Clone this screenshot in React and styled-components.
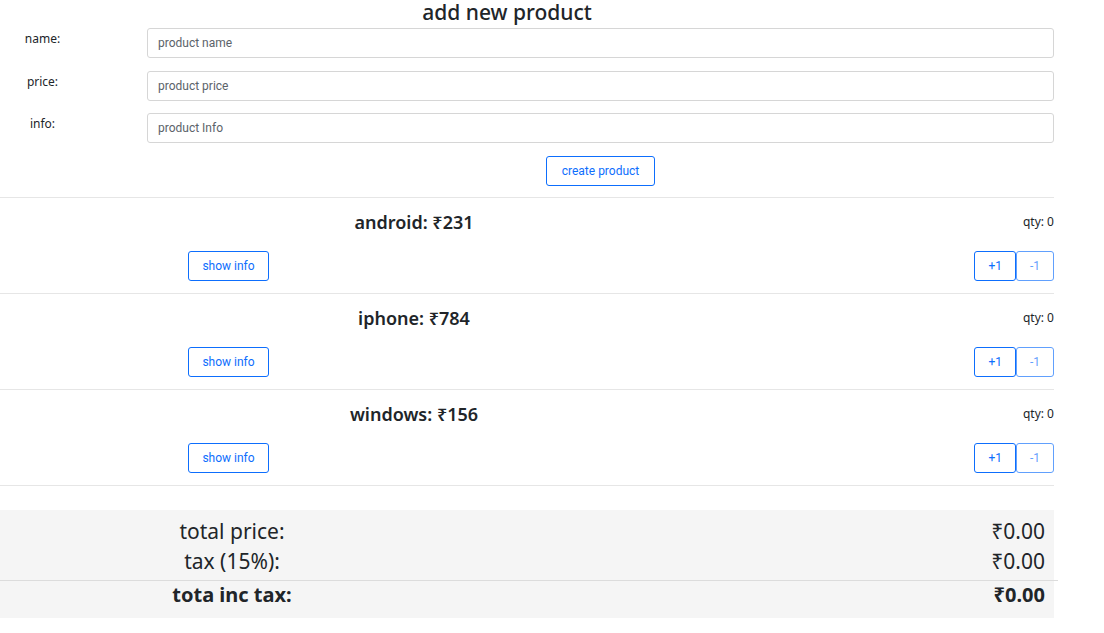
import React from "react";
import styled, { createGlobalStyle } from "styled-components";

const GlobalStyle = createGlobalStyle`
  body {
    margin: 0;
    background: #fff;
    font-family: "Noto Sans", "Open Sans", sans-serif;
    color: #212529;
  }
`;

const Page = styled.div`
  width: 1054px;
`;

const Title = styled.h1`
  margin: 0;
  width: 1014px;
  text-align: center;
  font-size: 21px;
  font-weight: 500;
  line-height: 24px;
  color: #212529;
  height: 28px;
`;

const Form = styled.form`
  display: flex;
  flex-direction: column;
  gap: 12.5px;
  padding-bottom: 11px;
  border-bottom: 1px solid #e6e6e6;
`;

const FieldRow = styled.div`
  display: grid;
  grid-template-columns: 85px 1fr;
  column-gap: 62px;
  align-items: start;
`;

const Label = styled.label`
  text-align: center;
  font-size: 12px;
  line-height: 16px;
  padding-top: 3px;
  color: #212529;
`;

const Input = styled.input`
  height: 30px;
  box-sizing: border-box;
  border: 1px solid #d6d6d6;
  border-radius: 3px;
  padding: 0 10px;
  font-family: Roboto, "Liberation Sans", sans-serif;
  font-size: 12px;
  color: #212529;
  &::placeholder {
    color: #5c636a;
  }
`;

const CreateWrap = styled.div`
  display: flex;
  justify-content: center;
  padding-left: 147px;
`;

const Button = styled.button`
  height: 30px;
  box-sizing: border-box;
  padding: 0 ${(p) => p.$pad || 13}px;
  background: #fff;
  border: 1px solid #0d6efd;
  border-radius: 3px;
  color: #0d6efd;
  font-family: Roboto, "Liberation Sans", sans-serif;
  font-size: 12px;
  cursor: pointer;
  &:disabled {
    opacity: 0.65;
    cursor: default;
  }
`;

const Product = styled.div`
  border-bottom: 1px solid #e6e6e6;
  padding: 12px 0 12px;
`;

const ProductTop = styled.div`
  display: grid;
  grid-template-columns: 828px 1fr;
  align-items: center;
  height: 24px;
  margin-bottom: 17px;
`;

const ProductName = styled.h3`
  margin: 0;
  text-align: center;
  font-size: 18px;
  font-weight: 600;
  line-height: 24px;
  color: #212529;
`;

const Qty = styled.span`
  text-align: right;
  font-size: 12px;
  color: #212529;
`;

const ProductBottom = styled.div`
  display: grid;
  grid-template-columns: 457px 1fr;
  align-items: center;
`;

const InfoCell = styled.div`
  display: flex;
  justify-content: center;
`;

const Counter = styled.div`
  display: flex;
  justify-content: flex-end;
`;

const Totals = styled.div`
  margin-top: 24px;
  background: #f5f5f5;
  padding: 6px 0 9px;
`;

const TotalRow = styled.div`
  display: grid;
  grid-template-columns: 464px 1fr;
  align-items: center;
  line-height: ${(p) => (p.$bold ? 28 : 30)}px;
  font-size: ${(p) => (p.$bold ? 20 : 21)}px;
  font-weight: ${(p) => (p.$bold ? 700 : 400)};
  color: #212529;
`;

const TotalLabel = styled.span`
  text-align: center;
`;

const TotalValue = styled.span`
  text-align: right;
  padding-right: 9px;
`;

const Divider = styled.div`
  border-top: 1px solid #dcdcdc;
  margin: 4px -4px 0 0;
`;

const products = [
  { name: "android", price: 231 },
  { name: "iphone", price: 784 },
  { name: "windows", price: 156 },
];

export default function App() {
  return (
    <Page>
      <GlobalStyle />
      <Title>add new product</Title>
      <Form onSubmit={(e) => e.preventDefault()}>
        <FieldRow>
          <Label>name:</Label>
          <Input placeholder="product name" />
        </FieldRow>
        <FieldRow>
          <Label>price:</Label>
          <Input placeholder="product price" />
        </FieldRow>
        <FieldRow>
          <Label>info:</Label>
          <Input placeholder="product Info" />
        </FieldRow>
        <CreateWrap>
          <Button type="submit" $pad={15}>
            create product
          </Button>
        </CreateWrap>
      </Form>
      {products.map((p) => (
        <Product key={p.name}>
          <ProductTop>
            <ProductName>
              {p.name}: ₹{p.price}
            </ProductName>
            <Qty>qty: 0</Qty>
          </ProductTop>
          <ProductBottom>
            <InfoCell>
              <Button>show info</Button>
            </InfoCell>
            <Counter>
              <Button>+1</Button>
              <Button disabled>-1</Button>
            </Counter>
          </ProductBottom>
        </Product>
      ))}
      <Totals>
        <TotalRow>
          <TotalLabel>total price:</TotalLabel>
          <TotalValue>₹0.00</TotalValue>
        </TotalRow>
        <TotalRow>
          <TotalLabel>tax (15%):</TotalLabel>
          <TotalValue>₹0.00</TotalValue>
        </TotalRow>
        <Divider />
        <TotalRow $bold>
          <TotalLabel>tota inc tax:</TotalLabel>
          <TotalValue>₹0.00</TotalValue>
        </TotalRow>
      </Totals>
    </Page>
  );
}
